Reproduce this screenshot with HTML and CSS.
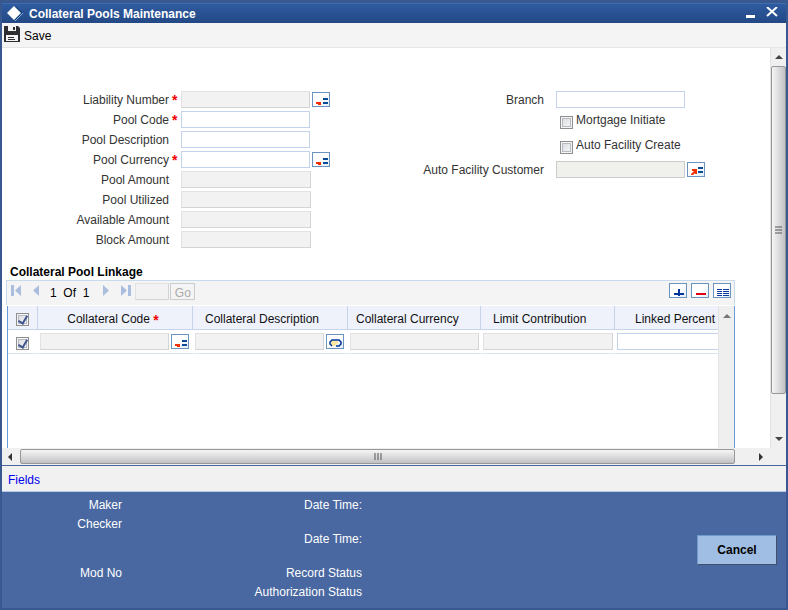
FILE: index.html
```html
<!DOCTYPE html>
<html lang="en">
<head>
    <meta charset="utf-8">
    <title>Collateral Pools Maintenance</title>
    <link rel="stylesheet" href="styles.css">
</head>
<body>
    <svg class="defs" width="0" height="0">
        <symbol id="lov" viewBox="0 0 16 13">
            <path d="M10 5h5v2h-5zM10 9h5v2h-5z" fill="#0b4a94"/>
            <path d="M3 9h5v3H5v-1H3z" fill="#f03000"/>
        </symbol>
    </svg>
    <div class="window">
        <header class="titlebar">
            <svg class="logo" width="18" height="16" viewBox="0 0 18 16">
                <path d="M9 0l8 7-8 8z" fill="#083b78"/>
                <path d="M9 15l8-8" stroke="#8fb0d8" fill="none"/>
                <path d="M8 0l7 7-7 7-7-7z" fill="#fff"/>
            </svg>
            <h1>Collateral Pools Maintenance</h1>
            <button class="winbtn" aria-label="Minimize"><svg width="12" height="14" viewBox="0 0 12 14"><path d="M2 8h9v3H2z" fill="#fff"/></svg></button>
            <button class="winbtn" aria-label="Close"><svg width="12" height="14" viewBox="0 0 12 14"><path d="M1 0l10 9M11 0L1 9" stroke="#fff" stroke-width="2"/></svg></button>
        </header>
        <div class="toolbar">
            <button class="save">
                <svg width="16" height="16" viewBox="0 0 16 16">
                    <path d="M0 0h14l2 2v14H0z" fill="#302d32"/>
                    <path d="M4 0h8v5H4z" fill="#f4f4f4"/>
                    <path d="M9 1h2v3H9z" fill="#302d32"/>
                    <path d="M2 9h12v6H2z" fill="#f4f4f4"/>
                    <path d="M4 11h6v1H4zM4 13h7v1H4z" fill="#302d32"/>
                </svg>
                <span>Save</span>
            </button>
        </div>

        <div class="content">
            <main class="page">
                <form class="fields">
                    <div class="left">
                        <div class="row"><label for="liab">Liability Number</label><i class="req">*</i><input type="text" id="liab" disabled><button type="button" class="ibtn" aria-label="Find liability"><svg><use href="#lov"/></svg></button></div>
                        <div class="row"><label for="code">Pool Code</label><i class="req">*</i><input type="text" id="code"></div>
                        <div class="row"><label for="desc">Pool Description</label><i class="req"></i><input type="text" id="desc"></div>
                        <div class="row"><label for="ccy">Pool Currency</label><i class="req">*</i><input type="text" id="ccy"><button type="button" class="ibtn" aria-label="Find currency"><svg><use href="#lov"/></svg></button></div>
                        <div class="row"><label for="amt">Pool Amount</label><i class="req"></i><input type="text" id="amt" class="amount" disabled></div>
                        <div class="row"><label for="util">Pool Utilized</label><i class="req"></i><input type="text" id="util" class="amount" disabled></div>
                        <div class="row"><label for="avail">Available Amount</label><i class="req"></i><input type="text" id="avail" class="amount" disabled></div>
                        <div class="row"><label for="block">Block Amount</label><i class="req"></i><input type="text" id="block" class="amount" disabled></div>
                    </div>
                    <div class="right">
                        <div class="row"><label for="branch">Branch</label><i class="req"></i><input type="text" id="branch"></div>
                        <div class="check"><input type="checkbox" id="mort"><label for="mort">Mortgage Initiate</label></div>
                        <div class="check"><input type="checkbox" id="auto"><label for="auto">Auto Facility Create</label></div>
                        <div class="row"><label for="cust">Auto Facility Customer</label><i class="req"></i><input type="text" id="cust" class="cust" disabled><button type="button" class="ibtn" aria-label="Find customer"><svg viewBox="0 0 16 13"><path d="M10 4h5v2h-5zM10 8h5v2h-5z" fill="#0b4a94"/><path d="M4 6h5v5H7v-1l-2 2H3v-1l3-3H4z" fill="#f03000"/></svg></button></div>
                    </div>
                </form>

                <section class="linkage">
                    <h2>Collateral Pool Linkage</h2>
                    <div class="pager">
                        <button class="nav" aria-label="First"><svg width="12" height="12"><path d="M0 0h3v11H0zM10 0v11L4 5.500z"/></svg></button>
                        <button class="nav" aria-label="Previous"><svg width="12" height="12"><path d="M8 0v11L2 5.500z"/></svg></button>
                        <span class="count">1&nbsp; Of &nbsp;1</span>
                        <button class="nav" aria-label="Next"><svg width="12" height="12"><path d="M3 0v11l6-5.500z"/></svg></button>
                        <button class="nav" aria-label="Last"><svg width="12" height="12"><path d="M1 0v11l6-5.500zM8 0h3v11H8z"/></svg></button>
                        <input type="text" class="goto" aria-label="Page number" disabled>
                        <button class="go" disabled>Go</button>
                        <div class="actions">
                            <button class="ibtn" aria-label="Add row"><svg viewBox="0 0 16 13"><path d="M8 5h2v4h4v2h-4v1H8v-1H4V9h4z" fill="#003399"/></svg></button>
                            <button class="ibtn" aria-label="Delete row"><svg viewBox="0 0 16 13"><path d="M4 9h10v2H4z" fill="#e00010"/></svg></button>
                            <button class="ibtn" aria-label="Single view"><svg viewBox="0 0 16 13"><path d="M3 5h5v1H3zM9 5h6v1H9zM3 7h5v1H3zM9 7h6v1H9zM3 9h5v1H3zM9 9h6v1H9zM3 11h5v1H3zM9 11h6v1H9z" fill="#0f3c98"/></svg></button>
                        </div>
                    </div>
                    <div class="grid">
                        <div class="clip">
                            <table>
                                <colgroup><col class="c-check"><col class="c-wide"><col class="c-wide"><col class="c-mid"><col class="c-last"><col></colgroup>
                                <thead>
                                    <tr>
                                        <th><input type="checkbox" aria-label="Select all" checked></th>
                                        <th class="code">Collateral Code <i class="req">*</i></th>
                                        <th class="desc">Collateral Description</th>
                                        <th class="ccy">Collateral Currency</th>
                                        <th class="desc">Limit Contribution</th>
                                        <th class="last">Linked Percent</th>
                                    </tr>
                                </thead>
                                <tbody>
                                    <tr>
                                        <td><input type="checkbox" aria-label="Select row" checked></td>
                                        <td><div class="cell"><input type="text" aria-label="Collateral Code" disabled><button class="ibtn" aria-label="Find collateral"><svg><use href="#lov"/></svg></button></div></td>
                                        <td><div class="cell"><input type="text" aria-label="Collateral Description" disabled><button class="ibtn" aria-label="Edit description"><svg viewBox="0 0 16 13"><path d="M4 6h7v2l-3 3H5L3 9z" fill="#ffe9a0"/><path d="M5 11L3 9V7l2-2h7l2 2v2l-2 2H9" fill="none" stroke="#003399" stroke-width="1.500"/></svg></button></div></td>
                                        <td><div class="cell"><input type="text" aria-label="Collateral Currency" disabled></div></td>
                                        <td><div class="cell"><input type="text" class="amount" aria-label="Limit Contribution" disabled></div></td>
                                        <td><div class="cell"><input type="text" aria-label="Linked Percent"></div></td>
                                    </tr>
                                </tbody>
                            </table>
                        </div>
                        <div class="innerscroll"><svg width="8" height="5"><path d="M4 0l4 4H0z" fill="#777"/></svg></div>
                    </div>
                </section>
            </main>
            <div class="vscroll">
                <svg width="8" height="5"><path d="M4 0l4 4H0z" fill="#444"/></svg>
                <div class="vthumb"><svg width="7" height="8"><path d="M0 1h7M0 4h7M0 7h7" stroke="#555"/></svg></div>
                <svg width="8" height="5"><path d="M0 0h8L4 4z" fill="#444"/></svg>
            </div>
        </div>
        <div class="hscroll">
            <svg width="5" height="8"><path d="M4 0v8L0 4z" fill="#333"/></svg>
            <div class="hthumb"><svg width="8" height="7"><path d="M1 0v7M4 0v7M7 0v7" stroke="#555"/></svg></div>
            <svg width="5" height="8"><path d="M0 0l4 4-4 4z" fill="#333"/></svg>
        </div>

        <nav class="links"><a href="#">Fields</a></nav>

        <footer class="audit">
            <div class="who">
                <span>Maker</span>
                <span class="tall">Checker</span>
                <span>Mod No</span>
            </div>
            <div class="when">
                <span class="dt">Date Time:</span>
                <span class="dt">Date Time:</span>
                <span>Record Status</span>
                <span>Authorization Status</span>
            </div>
            <button class="cancel">Cancel</button>
        </footer>
    </div>
</body>
</html>
```
FILE: styles.css
```css
* {
    box-sizing: border-box;
}
body {
    margin: 0;
    font: 12px/20px "Liberation Sans", Arial, sans-serif;
    color: #333;
}
button, input {
    font: inherit;
    margin: 0;
    padding: 0;
}
button {
    border: 0;
    background: none;
}
svg {
    display: block;
}
.defs {
    position: absolute;
}
.window {
    display: flex;
    flex-direction: column;
    min-height: 100vh;
    border: 2px solid #39588f;
    border-top-width: 3px;
    background: #fff;
}

/* title and toolbar */
.titlebar {
    display: flex;
    align-items: center;
    gap: 10px;
    height: 20px;
    padding: 0 8px 0 4px;
    border-top: 1px solid #3f6cb0;
    background: linear-gradient(#2f5ba0, #234885);
}
.titlebar h1 {
    flex: 1;
    margin: 0 0 0 -5px;
    font-size: 12px;
    color: #fff;
}
.winbtn {
    width: 12px;
    height: 16px;
}
.toolbar {
    height: 25px;
    padding: 2px;
    border-bottom: 1px solid #e6e6e6;
    background: #f4f4f4;
}
.save {
    display: flex;
    align-items: center;
    gap: 4px;
    height: 20px;
    color: #000;
}
.save svg {
    margin-bottom: 2px;
}
.save span {
    padding-top: 1px;
}

/* scrolling body */
.content {
    display: flex;
    flex: 1;
}
.page {
    display: flex;
    flex-direction: column;
    flex: 1;
    min-width: 0;
    padding: 41px 35px 0 4px;
}
.fields {
    display: grid;
    grid-template-columns: 375px 1fr;
}
.fields label {
    padding-top: 1px;
}
.row {
    display: flex;
    align-items: center;
    height: 20px;
}
.row label {
    width: 163px;
    text-align: right;
}
.req {
    width: 12px;
    height: 20px;
    padding-left: 3px;
    font-style: normal;
    font-weight: bold;
    font-size: 14px;
    line-height: 22px;
    color: #e00;
}
.row input {
    margin-right: 2px;
}
input[type=text] {
    width: 129px;
    height: 17px;
    border: 1px solid #c3d3ec;
    background: #fff;
}
input[type=text]:disabled {
    border-color: #e2e2e2 #d4d4d4 #d4d4d4 #e2e2e2;
    background: #f2f2f2;
}
input[type=text].amount {
    width: 130px;
}
input[type=text].cust:disabled {
    border-color: #ccc;
    background: #f0f0ec;
}
.ibtn {
    width: 18px;
    height: 15px;
    border: 1px solid #6a93bf;
    background: linear-gradient(135deg, #fff 50%, #e3edf8);
}
.ibtn svg {
    width: 16px;
    height: 13px;
}
input[type=checkbox] {
    appearance: none;
    display: inline-grid;
    place-items: center;
    width: 13px;
    height: 13px;
    border: 1px solid #8e8f8f;
    box-shadow: inset 0 0 0 1px #f4f4f4, inset 0 0 0 2px #b8bcc2;
    background: linear-gradient(135deg, #d5d8dd, #fafafa);
}
input[type=checkbox]:checked::before {
    content: "";
    width: 4px;
    height: 8px;
    margin-bottom: 2px;
    border: solid #40558f;
    border-width: 0 2px 2px 0;
    transform: rotate(30deg);
}
.check {
    display: flex;
    gap: 3px;
    height: 25px;
    padding-left: 179px;
}
.check input {
    margin-top: 7px;
}

/* linkage block */
.linkage {
    display: flex;
    flex-direction: column;
    flex: 1;
    padding-top: 16px;
}
.linkage h2 {
    margin: 0 0 0 4px;
    font-size: 12px;
    line-height: 15px;
    color: #000;
}
.pager {
    display: flex;
    align-items: flex-start;
    height: 25px;
    padding: 2px 3px 0 4px;
    border: 1px solid #c9d9ee;
    border-bottom: 0;
    background: #f4f4f4;
    color: #000;
}
.nav {
    width: 12px;
    margin: 2px 8px 0 0;
}
.nav svg {
    fill: #abbedf;
}
.count {
    margin: 0 11px 0 -1px;
}
.pager input.goto {
    width: 34px;
    margin-left: -5px;
}
.go {
    width: 25px;
    height: 17px;
    margin-left: 1px;
    border: 1px solid #c8cdd2;
    line-height: 19px;
    color: #aaa;
}
.actions {
    display: flex;
    gap: 4px;
    margin-left: auto;
}
.grid {
    display: flex;
    flex: 1;
    margin: 1px 0 0 1px;
    border: solid #6a9bd8;
    border-width: 0 1px;
}
.clip {
    flex: 1;
    min-width: 0;
    overflow: hidden;
}
table {
    width: 100%;
    table-layout: fixed;
    border-spacing: 0;
}
.c-check { width: 29px; }
.c-wide { width: 155px; }
.c-mid { width: 133px; }
.c-last { width: 134px; }
th {
    height: 24px;
    padding: 2px 0 0;
    border-left: 1px solid #c5d4ea;
    border-bottom: 1px solid #c5d4ea;
    background: #eff2fb;
    font-weight: normal;
    color: #111;
    white-space: nowrap;
}
th:first-child, td:first-child {
    border-left: 0;
}
th input, td input {
    vertical-align: middle;
}
th .req {
    padding: 0;
    line-height: 12px;
    vertical-align: -2px;
}
th.code {
    padding-right: 4px;
}
th.desc, th.ccy, th.last {
    text-align: left;
}
th.desc {
    padding-left: 12px;
}
th.ccy {
    padding-left: 8px;
}
th.last {
    padding-left: 20px;
}
td {
    height: 24px;
    padding: 0 0 0 2px;
    border-left: 1px solid #fff;
    border-bottom: 1px solid #dbe4f2;
    overflow: hidden;
}
td:first-child {
    padding: 2px 0 0;
    text-align: center;
}
.cell {
    display: flex;
    align-items: center;
    gap: 2px;
}
.cell input {
    flex: none;
}
.innerscroll {
    width: 16px;
    padding: 8px 4px;
    border-left: 1px solid #e3e3e3;
    background: #efefef;
}

/* scrollbars */
.vscroll {
    display: flex;
    flex-direction: column;
    align-items: center;
    width: 16px;
    padding: 7px 0 6px;
    border-left: 1px solid #e3e3e3;
    background: #f0f0f0;
}
.vthumb {
    display: grid;
    place-items: center;
    flex: 1;
    width: 15px;
    margin: 6px 0 43px;
    border: 1px solid #979797;
    border-radius: 2px;
    background: linear-gradient(90deg, #f5f5f5, #dcdcde 50%, #c0c1c4);
}
.hscroll {
    display: flex;
    align-items: center;
    height: 17px;
    padding: 0 22px 0 6px;
    background: #f0f0f0;
}
.hthumb {
    display: grid;
    place-items: center;
    flex: 1;
    height: 15px;
    margin: 0 24px 0 7px;
    border: 1px solid #979797;
    border-radius: 2px;
    background: linear-gradient(#f5f5f5, #dcdcde 50%, #c0c1c4);
}

/* footer */
.links {
    height: 27px;
    padding: 4px 6px;
    border-top: 1px solid #4867a0;
    border-bottom: 1px solid #b5cbe8;
    background: #f1f1f1;
}
.links a {
    color: #00e;
    text-decoration: none;
}
.audit {
    display: flex;
    height: 116px;
    padding: 4px 9px 0 0;
    background: #4968a1;
    color: #fff;
    line-height: 19px;
}
.who, .when {
    display: flex;
    flex-direction: column;
    text-align: right;
}
.who {
    width: 120px;
}
.when {
    width: 240px;
}
.tall {
    height: 49px;
}
.dt {
    height: 34px;
}
.cancel {
    width: 80px;
    height: 30px;
    margin: 39px 0 0 auto;
    border: 1px solid;
    border-color: #6f9ac8 #3f5068 #3f5068 #6f9ac8;
    background: #a0bde4;
    font-weight: bold;
    color: #000;
}
```
